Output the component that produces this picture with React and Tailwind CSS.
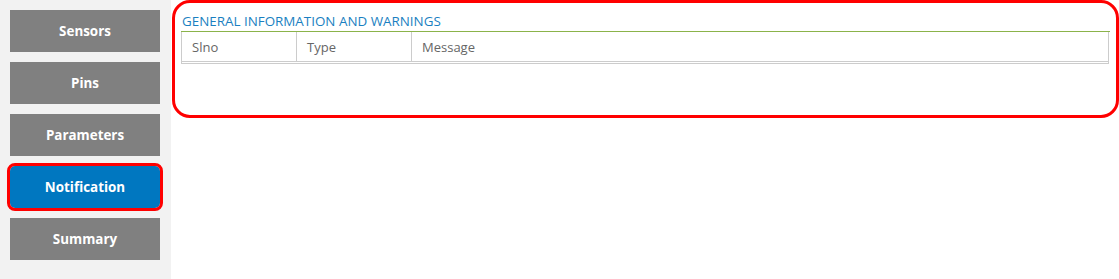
export default function App() {
  const items = ["Sensors", "Pins", "Parameters", "Notification", "Summary"];
  return (
    <div className="flex w-[1119px] h-[279px] bg-white" style={{ fontFamily: '"Open Sans", "Liberation Sans", sans-serif' }}>
      <div className="w-[171px] h-full bg-[#f2f2f2] flex flex-col gap-[10px] pt-[10px] pl-[10px]">
        {items.map((t) => (
          <div
            key={t}
            className={
              t === "Notification"
                ? "w-[150px] h-[42px] flex items-center justify-center bg-[#0077c0] text-white font-bold text-[13.4px] rounded-[5px] outline-3 outline-[#ff0000]"
                : "w-[150px] h-[42px] flex items-center justify-center bg-[#808080] text-white font-bold text-[13.4px]"
            }
          >
            {t}
          </div>
        ))}
      </div>
      <div className="flex-1 pl-[1px]">
        <div className="w-[947px] h-[118px] border-[3px] border-[#ff0000] rounded-[18px] px-[6px] pt-[7px]">
          <div className="text-[13.4px] leading-[20px] text-[#1a7fc1] pl-[1px] h-[22px] border-b border-[#8bb34a] flex items-center">
            GENERAL INFORMATION AND WARNINGS
          </div>
          <div className="w-[928px] border-x border-b border-[#cccccc] pb-[1px]">
            <div className="flex h-[30px] border-b border-[#cccccc] text-[13px] text-[#666666]">
              <div className="w-[115px] border-r border-[#cccccc] flex items-center pl-[10px] pt-[2px]">Slno</div>
              <div className="w-[115px] border-r border-[#cccccc] flex items-center pl-[10px] pt-[2px]">Type</div>
              <div className="flex-1 flex items-center pl-[10px] pt-[2px]">Message</div>
            </div>
          </div>
        </div>
      </div>
    </div>
  );
}
